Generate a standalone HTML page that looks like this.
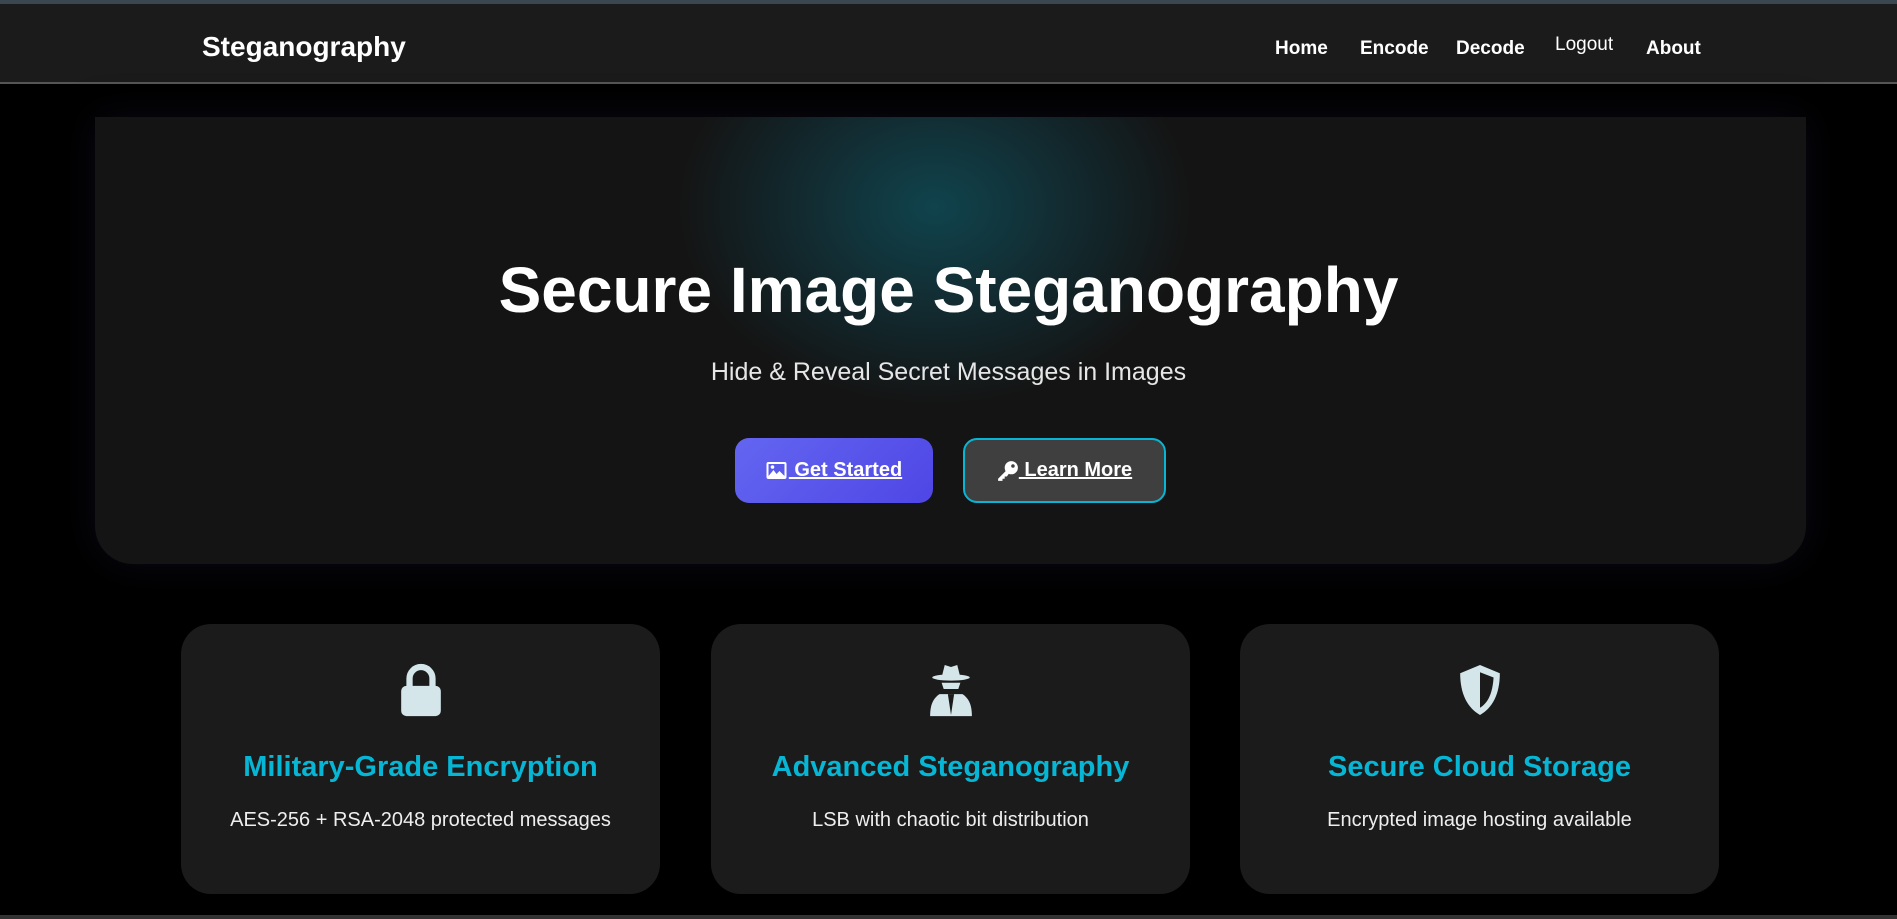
<!DOCTYPE html>
<html><head><meta charset="utf-8"><style>
*{margin:0;padding:0;box-sizing:border-box}
body{width:1897px;height:919px;background:#000;font-family:"Liberation Sans",sans-serif;overflow:hidden;position:relative;color:#fff}
.top{position:absolute;left:0;top:0;width:1897px;height:4px;background:#3a4650}
nav{position:absolute;left:0;top:4px;width:1897px;height:80px;background:#1b1b1b;border-bottom:2px solid #555}
.brand{position:absolute;left:202px;top:27px;font-size:28px;font-weight:bold}
.nl{position:absolute;top:34px;font-size:19px;font-weight:bold}
.hero{position:absolute;left:95px;top:117px;width:1711px;height:447px;background:#141414;border-radius:0 0 38px 38px;overflow:hidden;box-shadow:0 0 40px rgba(30,30,60,.35)}
.glow{position:absolute;left:580px;top:-110px;width:520px;height:400px;background:radial-gradient(ellipse at center,rgba(16,70,80,.95) 0%,rgba(16,60,70,.5) 40%,rgba(20,20,20,0) 70%)}
h1{position:absolute;left:0;width:1897px;top:253px;text-align:center;font-size:64px;font-weight:bold}
.sub{position:absolute;left:0;width:1897px;top:358px;text-align:center;font-size:25px;color:#e6e6e6}
.btn{position:absolute;top:438px;height:65px;border-radius:14px;display:flex;align-items:center;justify-content:center;font-size:20px;font-weight:bold;text-decoration:underline}
.b1{left:735px;width:198px;background:linear-gradient(135deg,#6366f1,#4f46e5)}
.b2{left:963px;width:203px;background:#3f3f3f;border:2px solid #06b6d4}
.card{position:absolute;top:624px;width:479px;height:270px;background:#1b1b1b;border-radius:30px;text-align:center}
.card svg{position:absolute;left:50%;transform:translateX(-50%);top:38px}
.card h3{position:absolute;width:100%;top:127px;font-size:29px;color:#06b6d4}
.card p{position:absolute;width:100%;top:185px;font-size:20px;color:#eee}
.bot{position:absolute;left:0;top:915px;width:1897px;height:4px;background:#333}
</style></head><body>
<div class="top"></div>
<nav><div class="brand">Steganography</div>
<div class="nl" style="left:1275px">Home</div>
<div class="nl" style="left:1360px">Encode</div>
<div class="nl" style="left:1456px">Decode</div>
<div class="nl" style="left:1555px;top:30px;font-weight:normal">Logout</div>
<div class="nl" style="left:1646px">About</div>
</nav>
<div class="hero"><div class="glow"></div></div>
<h1>Secure Image Steganography</h1>
<div class="sub">Hide &amp; Reveal Secret Messages in Images</div>
<div class="btn b1"><svg width="21" height="17" viewBox="0 0 20 17" style="margin-right:2px"><rect x="0" y="0" width="20" height="17" rx="2" fill="#fff"/><rect x="2" y="2" width="16" height="12" fill="#5a5bea"/><path d="M2 14l5-6 3 4 3-3 5 5z" fill="#fff"/><circle cx="6" cy="5" r="1.8" fill="#fff"/></svg>&nbsp;Get Started</div>
<div class="btn b2"><svg width="22" height="22" viewBox="0 0 20 20"><circle cx="13" cy="7" r="6" fill="#fff"/><circle cx="14.5" cy="5.5" r="1.6" fill="#3f3f3f"/><path d="M9 9L1 17v2h4v-2h2v-2h2l2-3z" fill="#fff"/></svg>&nbsp;Learn More</div>
<div class="card" style="left:181px"><svg width="48" height="56" viewBox="0 0 46 52"><path d="M12 24V15a11 11 0 0 1 22 0v9" fill="none" stroke="#d4e6ea" stroke-width="6"/><rect x="4" y="22" width="38" height="29" rx="5" fill="#d4e6ea"/></svg><h3>Military-Grade Encryption</h3><p>AES-256 + RSA-2048 protected messages</p></div>
<div class="card" style="left:711px"><svg width="48" height="56" viewBox="0 0 46 52"><path d="M14 14l3-12 6 2 6-2 3 12z" fill="#d4e6ea"/><ellipse cx="23" cy="14" rx="18" ry="3" fill="#d4e6ea"/><path d="M14 19h18l-2 6h-14z" fill="#d4e6ea"/><path d="M12 30h22c6 4 9 10 9 21H3c0-11 3-17 9-21z" fill="#d4e6ea"/><path d="M20 30l3 20 3-20z" fill="#1b1b1b"/></svg><h3>Advanced Steganography</h3><p>LSB with chaotic bit distribution</p></div>
<div class="card" style="left:1240px"><svg width="48" height="56" viewBox="0 0 46 52"><path d="M23 2l19 8c0 20-7 33-19 40C11 43 4 30 4 10z" fill="#d4e6ea"/><path d="M23 9l13 5c-1 15-5 24-13 29z" fill="#1b1b1b"/></svg><h3>Secure Cloud Storage</h3><p>Encrypted image hosting available</p></div>
<div class="bot"></div>
</body></html>
